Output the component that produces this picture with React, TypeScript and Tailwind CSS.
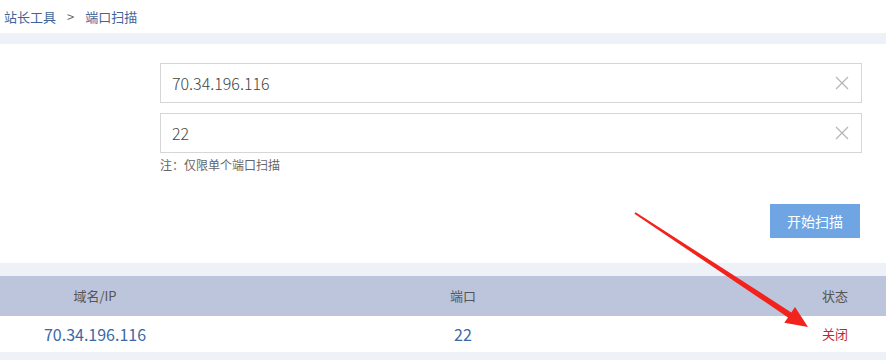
import React from 'react'

const font = { fontFamily: '"Noto Sans CJK SC", "Noto Sans", sans-serif' }

function ClearIcon() {
  return (
    <svg width="14" height="14" viewBox="0 0 14 14" className="shrink-0">
      <path d="M1 1 L13 13 M13 1 L1 13" stroke="#b5b5b5" strokeWidth="1.2" fill="none" />
    </svg>
  )
}

function Field({ value }: { value: string }) {
  return (
    <div className="flex h-[40px] items-center justify-between border border-[#d6d6d6] bg-white pl-[11px] pr-[12px]">
      <span className="text-[16px] text-[#444] font-light">{value}</span>
      <ClearIcon />
    </div>
  )
}

function Arrow() {
  return (
    <svg className="pointer-events-none absolute left-0 top-0" width="886" height="360" viewBox="0 0 886 360">
      <polygon
        points="635.6,212.2 791.3,312.4 795,307 808,327 784.3,322.8 788,317.4 634.4,213.8"
        fill="#f2231c"
      />
    </svg>
  )
}

export default function App() {
  return (
    <div className="relative h-[360px] w-[886px] overflow-hidden bg-white" style={font}>
      <div className="flex h-[33px] items-center gap-[11px] pl-[4px] text-[13px] text-[#3f649a]">
        <span>站长工具</span>
        <span className="text-[#666]">&gt;</span>
        <span>端口扫描</span>
      </div>
      <div className="h-[11px] bg-[#eef2f8]" />
      <div className="h-[219px] pl-[160px] pr-[24px] pt-[19px]">
        <div className="flex flex-col gap-[10px]">
          <Field value="70.34.196.116" />
          <Field value="22" />
        </div>
        <div className="mt-[3px] text-[12px] text-[#666]">注：仅限单个端口扫描</div>
        <div className="mt-[30px] flex justify-end pr-[2px]">
          <button className="h-[34px] w-[90px] bg-[#6ea5e2] text-[14px] text-white">开始扫描</button>
        </div>
      </div>
      <div className="h-[13px] bg-[#eef2f8]" />
      <div className="grid h-[40px] grid-cols-[190px_1fr_150px] items-center bg-[#bcc5dc] text-[13px] text-[#555]">
        <span className="text-center">域名/IP</span>
        <span className="text-center">端口</span>
        <span className="pr-[38px] text-right">状态</span>
      </div>
      <div className="grid h-[36px] grid-cols-[190px_1fr_150px] items-center text-[16px]">
        <span className="text-center text-[#3b69a5]">70.34.196.116</span>
        <span className="text-center text-[#3b69a5]">22</span>
        <span className="pr-[38px] text-right text-[13px] text-[#c0262e]">关闭</span>
      </div>
      <div className="h-[8px] bg-[#eef2f8]" />
      <Arrow />
    </div>
  )
}
